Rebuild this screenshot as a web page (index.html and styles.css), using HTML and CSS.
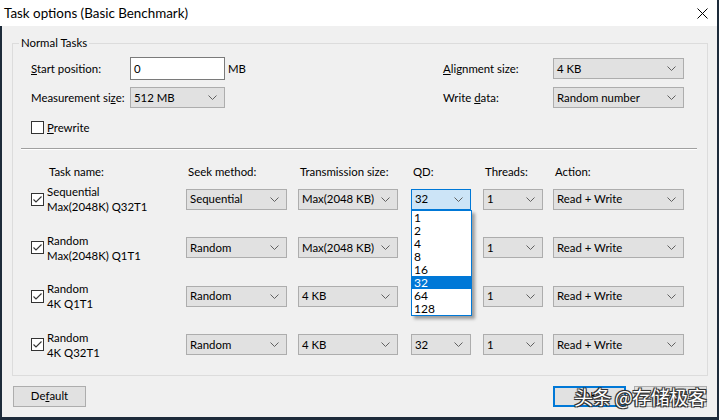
FILE: index.html
```html
<!DOCTYPE html>
<html lang="en">
<head>
<meta charset="utf-8">
<title>Task options (Basic Benchmark)</title>
<link rel="stylesheet" href="styles.css">
</head>
<body>
<div class="window">
  <div class="titlebar">
    <span class="title">Task options (Basic Benchmark)</span>
    <svg class="close" width="11" height="11" viewBox="0 0 11 11"><path d="M0.5 0.5 L10.5 10.5 M10.5 0.5 L0.5 10.5" stroke="#000" stroke-width="1" fill="none"/></svg>
  </div>
  <div class="content">
    <fieldset class="group">
      <legend>Normal Tasks</legend>
      <div class="settings">
        <span class="lbl"><u>S</u>tart position:</span>
        <div class="ctl"><div class="textbox">0</div><span class="unit">MB</span></div>
        <span class="lbl"><u>A</u>lignment size:</span>
        <div class="select w131"><span>4 KB</span><svg class="chev" width="9" height="5" viewBox="0 0 9 5"><polyline points="0.5,0.5 4.5,4.5 8.5,0.5" fill="none" stroke="#606060"/></svg></div>

        <span class="lbl">Measurement si<u>z</u>e:</span>
        <div class="select w95"><span>512 MB</span><svg class="chev" width="9" height="5" viewBox="0 0 9 5"><polyline points="0.5,0.5 4.5,4.5 8.5,0.5" fill="none" stroke="#606060"/></svg></div>
        <span class="lbl">Write <u>d</u>ata:</span>
        <div class="select w131"><span>Random number</span><svg class="chev" width="9" height="5" viewBox="0 0 9 5"><polyline points="0.5,0.5 4.5,4.5 8.5,0.5" fill="none" stroke="#606060"/></svg></div>
      </div>
      <div class="check-row">
        <span class="checkbox"></span><span class="check-label"><u>P</u>rewrite</span>
      </div>
      <div class="separator"></div>

      <div class="tasks-head">
        <span class="head name-head">Task name:</span>
        <span class="head">Seek method:</span>
        <span class="head">Transmission size:</span>
        <span class="head">QD:</span>
        <span class="head">Threads:</span>
        <span class="head">Action:</span>
      </div>

      <div class="tasks">
        <div class="task-name"><span class="checkbox"><svg width="11" height="11" viewBox="0 0 11 11"><polyline points="1.5,5.5 4,8 9.5,2.5" fill="none" stroke="#333" stroke-width="1.1"/></svg></span><span class="name-text">Sequential<br>Max(2048K) Q32T1</span></div>
        <div class="select w101"><span>Sequential</span><svg class="chev" width="9" height="5" viewBox="0 0 9 5"><polyline points="0.5,0.5 4.5,4.5 8.5,0.5" fill="none" stroke="#606060"/></svg></div>
        <div class="select w100"><span>Max(2048 KB)</span><svg class="chev" width="9" height="5" viewBox="0 0 9 5"><polyline points="0.5,0.5 4.5,4.5 8.5,0.5" fill="none" stroke="#606060"/></svg></div>
        <div class="qd-cell">
          <div class="select w60 focused"><span>32</span><svg class="chev" width="9" height="5" viewBox="0 0 9 5"><polyline points="0.5,0.5 4.5,4.5 8.5,0.5" fill="none" stroke="#606060"/></svg></div>
          <ul class="listbox">
            <li>1</li><li>2</li><li>4</li><li>8</li><li>16</li><li class="sel">32</li><li>64</li><li>128</li>
          </ul>
        </div>
        <div class="select w60"><span>1</span><svg class="chev" width="9" height="5" viewBox="0 0 9 5"><polyline points="0.5,0.5 4.5,4.5 8.5,0.5" fill="none" stroke="#606060"/></svg></div>
        <div class="select w131"><span>Read + Write</span><svg class="chev" width="9" height="5" viewBox="0 0 9 5"><polyline points="0.5,0.5 4.5,4.5 8.5,0.5" fill="none" stroke="#606060"/></svg></div>

        <div class="task-name"><span class="checkbox"><svg width="11" height="11" viewBox="0 0 11 11"><polyline points="1.5,5.5 4,8 9.5,2.5" fill="none" stroke="#333" stroke-width="1.1"/></svg></span><span class="name-text">Random<br>Max(2048K) Q1T1</span></div>
        <div class="select w101"><span>Random</span><svg class="chev" width="9" height="5" viewBox="0 0 9 5"><polyline points="0.5,0.5 4.5,4.5 8.5,0.5" fill="none" stroke="#606060"/></svg></div>
        <div class="select w100"><span>Max(2048 KB)</span><svg class="chev" width="9" height="5" viewBox="0 0 9 5"><polyline points="0.5,0.5 4.5,4.5 8.5,0.5" fill="none" stroke="#606060"/></svg></div>
        <div class="select w60"><span>1</span><svg class="chev" width="9" height="5" viewBox="0 0 9 5"><polyline points="0.5,0.5 4.5,4.5 8.5,0.5" fill="none" stroke="#606060"/></svg></div>
        <div class="select w60"><span>1</span><svg class="chev" width="9" height="5" viewBox="0 0 9 5"><polyline points="0.5,0.5 4.5,4.5 8.5,0.5" fill="none" stroke="#606060"/></svg></div>
        <div class="select w131"><span>Read + Write</span><svg class="chev" width="9" height="5" viewBox="0 0 9 5"><polyline points="0.5,0.5 4.5,4.5 8.5,0.5" fill="none" stroke="#606060"/></svg></div>

        <div class="task-name"><span class="checkbox"><svg width="11" height="11" viewBox="0 0 11 11"><polyline points="1.5,5.5 4,8 9.5,2.5" fill="none" stroke="#333" stroke-width="1.1"/></svg></span><span class="name-text">Random<br>4K Q1T1</span></div>
        <div class="select w101"><span>Random</span><svg class="chev" width="9" height="5" viewBox="0 0 9 5"><polyline points="0.5,0.5 4.5,4.5 8.5,0.5" fill="none" stroke="#606060"/></svg></div>
        <div class="select w100"><span>4 KB</span><svg class="chev" width="9" height="5" viewBox="0 0 9 5"><polyline points="0.5,0.5 4.5,4.5 8.5,0.5" fill="none" stroke="#606060"/></svg></div>
        <div class="select w60"><span>1</span><svg class="chev" width="9" height="5" viewBox="0 0 9 5"><polyline points="0.5,0.5 4.5,4.5 8.5,0.5" fill="none" stroke="#606060"/></svg></div>
        <div class="select w60"><span>1</span><svg class="chev" width="9" height="5" viewBox="0 0 9 5"><polyline points="0.5,0.5 4.5,4.5 8.5,0.5" fill="none" stroke="#606060"/></svg></div>
        <div class="select w131"><span>Read + Write</span><svg class="chev" width="9" height="5" viewBox="0 0 9 5"><polyline points="0.5,0.5 4.5,4.5 8.5,0.5" fill="none" stroke="#606060"/></svg></div>

        <div class="task-name"><span class="checkbox"><svg width="11" height="11" viewBox="0 0 11 11"><polyline points="1.5,5.5 4,8 9.5,2.5" fill="none" stroke="#333" stroke-width="1.1"/></svg></span><span class="name-text">Random<br>4K Q32T1</span></div>
        <div class="select w101"><span>Random</span><svg class="chev" width="9" height="5" viewBox="0 0 9 5"><polyline points="0.5,0.5 4.5,4.5 8.5,0.5" fill="none" stroke="#606060"/></svg></div>
        <div class="select w100"><span>4 KB</span><svg class="chev" width="9" height="5" viewBox="0 0 9 5"><polyline points="0.5,0.5 4.5,4.5 8.5,0.5" fill="none" stroke="#606060"/></svg></div>
        <div class="select w60"><span>32</span><svg class="chev" width="9" height="5" viewBox="0 0 9 5"><polyline points="0.5,0.5 4.5,4.5 8.5,0.5" fill="none" stroke="#606060"/></svg></div>
        <div class="select w60"><span>1</span><svg class="chev" width="9" height="5" viewBox="0 0 9 5"><polyline points="0.5,0.5 4.5,4.5 8.5,0.5" fill="none" stroke="#606060"/></svg></div>
        <div class="select w131"><span>Read + Write</span><svg class="chev" width="9" height="5" viewBox="0 0 9 5"><polyline points="0.5,0.5 4.5,4.5 8.5,0.5" fill="none" stroke="#606060"/></svg></div>
      </div>
    </fieldset>

    <div class="buttons">
      <div class="button default-btn">De<u>f</u>ault</div>
      <div class="right-buttons">
        <div class="button primary">OK</div>
        <div class="button">Cancel</div>
      </div>
    </div>
  </div>
  <div class="watermark">头条 @存储极客</div>
</div>
</body>
</html>
```

FILE: styles.css
```css
* { box-sizing: border-box; }
html, body { margin: 0; padding: 0; }
body {
  width: 719px;
  height: 420px;
  overflow: hidden;
  background: #f0f0f0;
  font-family: Lato, "Noto Sans", "Noto Sans CJK SC", sans-serif;
  font-size: 11.4px;
  color: #000;
}
u { text-decoration: underline; text-underline-offset: 1px; }

.window {
  position: relative;
  width: 719px;
  height: 420px;
  display: flex;
  flex-direction: column;
  background: #f0f0f0;
  border-right: 2px solid #1d2b3a;
  border-bottom: 3px solid #1d2b3a;
}
.titlebar {
  height: 26px;
  flex: none;
  background: #fff;
  display: flex;
  align-items: center;
  justify-content: space-between;
  padding: 0 9px 0 4px;
}
.title { font-size: 13.4px; line-height: 16px; }
.close { display: block; }

.content {
  flex: 1;
  border-left: 2px solid #1d2b3a;
  padding: 9px 9px 0 10px;
  display: flex;
  flex-direction: column;
}

.group {
  margin: 0;
  padding: 0 0 15px 0;
  border: 1px solid #dcdcdc;
  min-width: 0;
}
.group legend {
  margin-left: 6px;
  padding: 0 2px;
  line-height: 16px;
}

.settings {
  margin: 6px 0 0 18px;
  display: grid;
  grid-template-columns: 99px 313px 110px 131px;
  grid-template-rows: 23px 21px;
  row-gap: 7px;
  align-items: center;
}
.ctl { display: flex; align-items: center; gap: 3px; }
.textbox {
  width: 95px;
  height: 23px;
  background: #fff;
  border: 1px solid #7a7a7a;
  padding: 0 3px;
  line-height: 21px;
}
.unit, .lbl { line-height: 16px; white-space: nowrap; }

.select {
  height: 21px;
  background: #e1e1e1;
  border: 1px solid #adadad;
  display: flex;
  align-items: center;
  justify-content: space-between;
  padding: 0 7px 0 3px;
  line-height: 16px;
  white-space: nowrap;
}
.select .chev { display: block; flex: none; }
.select.focused { background: #cce4f7; border-color: #0078d7; }
.w95 { width: 95px; }
.w131 { width: 131px; }
.w101 { width: 101px; }
.w100 { width: 100px; }
.w60 { width: 60px; }

.check-row {
  margin: 12px 0 0 18px;
  display: flex;
  align-items: center;
  gap: 3px;
  line-height: 15px;
}
.checkbox {
  width: 13px;
  height: 13px;
  flex: none;
  background: #fff;
  border: 1px solid #333;
  display: flex;
  align-items: center;
  justify-content: center;
}
.checkbox svg { display: block; }

.separator {
  margin: 13px 10px 0 8px;
  height: 2px;
  border-top: 1px solid #a0a0a0;
  border-bottom: 1px solid #fff;
}

.tasks-head, .tasks {
  display: grid;
  grid-template-columns: 155px 112px 113px 72px 70px 131px;
  margin-left: 18px;
}
.tasks-head { margin-top: 14px; }
.head { line-height: 16px; padding-left: 2px; white-space: nowrap; }
.name-head { padding-left: 18px; }

.tasks {
  margin-top: 4px;
  grid-auto-rows: 30px;
  row-gap: 18.67px;
  align-items: center;
}

.task-name {
  display: flex;
  align-items: center;
  gap: 3px;
  white-space: nowrap;
}
.name-text { line-height: 15px; }

.qd-cell { position: relative; }
.listbox {
  position: absolute;
  left: 0;
  top: 21px;
  width: 61px;
  margin: 0;
  padding: 0;
  list-style: none;
  background: #fff;
  border: 1px solid #0078d7;
  box-shadow: 3px 3px 3px rgba(0,0,0,0.35);
  z-index: 2;
}
.listbox li {
  height: 13px;
  line-height: 13px;
  padding-left: 2px;
  font-size: 12px;
}
.listbox li.sel { background: #0078d7; color: #fff; }

.buttons {
  margin: 10px 1px 0 1px;
  display: flex;
  justify-content: space-between;
}
.right-buttons { display: flex; gap: 8px; }
.button {
  width: 73px;
  height: 21px;
  background: #e1e1e1;
  border: 1px solid #adadad;
  display: flex;
  align-items: center;
  justify-content: center;
  line-height: 16px;
}
.button.primary { border: 2px solid #0078d7; }

.watermark {
  position: absolute;
  left: 574px;
  top: 384px;
  font-family: "Noto Sans CJK SC", sans-serif;
  font-size: 19px;
  line-height: 26px;
  color: #fff;
  white-space: nowrap;
  letter-spacing: -0.5px;
  text-shadow: 1px 1px 0 #333, -1px -1px 0 #333, 1px -1px 0 #333, -1px 1px 0 #333, 0 0 2px #000;
  z-index: 3;
}
```
